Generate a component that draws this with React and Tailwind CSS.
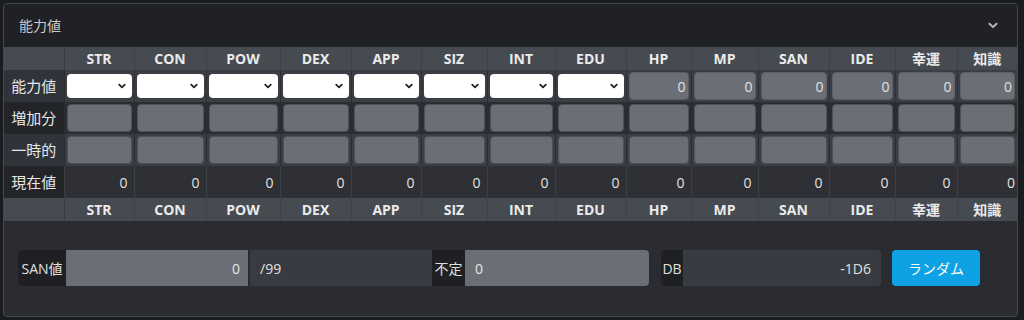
import React from "react";

const cols = [
  ["STR", 70], ["CON", 72], ["POW", 74], ["DEX", 71], ["APP", 70], ["SIZ", 66], ["INT", 68], ["EDU", 71],
  ["HP", 65], ["MP", 67], ["SAN", 71], ["IDE", 66], ["幸運", 62], ["知識", 60],
];
const font = { fontFamily: '"Open Sans", "Noto Sans CJK JP", sans-serif' };

function Chevron({ className, w = 1.8 }) {
  return (
    <svg viewBox="0 0 10 6" className={className} fill="none" stroke="currentColor" strokeWidth={w} strokeLinecap="round" strokeLinejoin="round">
      <path d="M1.5 1.2 L5 4.6 L8.5 1.2" />
    </svg>
  );
}

function HeaderRow() {
  return (
    <tr className="h-[23px] bg-[#464a51]">
      <td className="border-r border-[#3a3d43]"></td>
      {cols.map(([n]) => (
        <td key={n} className="border-r border-[#3f4248] last:border-r-0 text-center text-[14px] font-bold text-[#ebebeb] leading-none">{n}</td>
      ))}
    </tr>
  );
}

export default function App() {
  return (
    <div className="w-[1024px] h-[320px] bg-[#1b1c20] p-[3px]" style={font}>
      <div className="w-[1015px] h-[314px] border border-[#45484e] rounded-[4px] bg-[#2a2c31] overflow-hidden flex flex-col">
        <div className="h-[43px] bg-[#1f2126] flex items-center justify-between pl-[15px] pr-[19px]">
          <span className="text-[14px] text-[#c9cacc]">能力値</span>
          <Chevron className="w-[10px] h-[7px] text-[#b8b9bb]" w={2} />
        </div>
        <table className="table-fixed border-collapse w-[1013px]">
          <colgroup>
            <col style={{ width: 60 }} />
            {cols.map(([n, w]) => <col key={n} style={{ width: w }} />)}
          </colgroup>
          <tbody>
            <HeaderRow />
            <tr className="h-[32px] bg-[#3b3e45]">
              <td className="bg-[#30333a] text-[15px] text-[#e6e6e6] text-center border-r border-[#2a2c31]">能力値</td>
              {cols.map(([n], i) => (
                <td key={n} className="px-[2px] border-r border-[#2e3035] last:border-r-0">
                  {i < 8 ? (
                    <div className="h-[24px] bg-white rounded-[4px] flex items-center justify-end pr-[6px]">
                      <Chevron className="w-[8px] h-[6px] text-[#222]" w={2.2} />
                    </div>
                  ) : (
                    <div className="h-[28px] bg-[#6a6f76] border border-[#5b6067] rounded-[4px] flex items-center justify-end pr-[2px] text-[14px] text-[#e0e0e0]">0</div>
                  )}
                </td>
              ))}
            </tr>
            {["増加分", "一時的"].map((lab, r) => (
              <tr key={lab} className={r === 0 ? "h-[32px] bg-[#2b2d32]" : "h-[32px] bg-[#3b3e45]"}>
                <td className={(r === 0 ? "bg-[#222428]" : "bg-[#30333a]") + " text-[15px] text-[#e6e6e6] text-center border-r border-[#2a2c31]"}>{lab}</td>
                {cols.map(([n]) => (
                  <td key={n} className="px-[2px] border-r border-[#2a2c31] last:border-r-0">
                    <div className="h-[28px] bg-[#6a6f76] border border-[#4e5258] rounded-[4px]"></div>
                  </td>
                ))}
              </tr>
            ))}
            <tr className="h-[32px] bg-[#2e3035]">
              <td className="bg-[#222428] text-[15px] text-[#e6e6e6] text-center border-r border-[#3a3c42]">現在値</td>
              {cols.map(([n]) => (
                <td key={n} className="text-right pr-[6px] text-[14px] text-[#e0e0e0] border-r border-[#3d4046] last:border-r-0 last:pr-[2px]">0</td>
              ))}
            </tr>
            <HeaderRow />
          </tbody>
        </table>
        <div className="flex items-center pl-[14px] pt-[29px]">
          <div className="flex h-[36px] text-[14px]">
            <div className="w-[48px] bg-[#1e2024] text-[#e0e0e0] flex items-center justify-center rounded-l-[4px]">SAN値</div>
            <div className="w-[182px] bg-[#6a6f76] text-[#e6e6e6] flex items-center justify-end pr-[8px]">0</div>
            <div className="w-[2px]"></div>
            <div className="w-[182px] bg-[#393b42] text-[#e0e0e0] flex items-center pl-[10px]">/99</div>
            <div className="w-[33px] bg-[#1e2024] text-[#e0e0e0] flex items-center justify-center">不定</div>
            <div className="w-[184px] bg-[#6a6f76] text-[#e6e6e6] flex items-center pl-[10px] rounded-r-[4px]">0</div>
          </div>
          <div className="flex h-[36px] text-[14px] ml-[12px]">
            <div className="w-[22px] bg-[#1e2024] text-[#e0e0e0] flex items-center justify-center rounded-l-[4px]">DB</div>
            <div className="w-[198px] bg-[#393b42] text-[#e0e0e0] flex items-center justify-end pr-[10px] rounded-r-[4px]">-1D6</div>
          </div>
          <button className="ml-[11px] w-[88px] h-[36px] bg-[#0ea1e4] rounded-[4px] text-[14px] text-white">ランダム</button>
        </div>
      </div>
    </div>
  );
}
